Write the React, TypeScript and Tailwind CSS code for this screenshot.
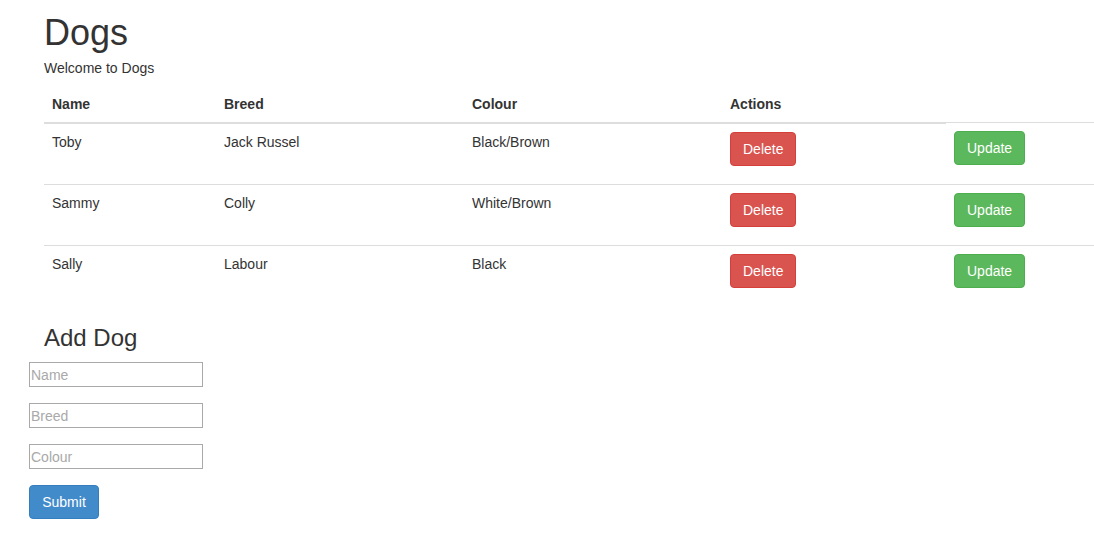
import { useState } from "react";

type Dog = {
  name: string;
  breed: string;
  colour: string;
};

const initialDogs: Dog[] = [
  { name: "Toby", breed: "Jack Russel", colour: "Black/Brown" },
  { name: "Sammy", breed: "Colly", colour: "White/Brown" },
  { name: "Sally", breed: "Labour", colour: "Black" },
];

export default function App() {
  const [dogs, setDogs] = useState<Dog[]>(initialDogs);
  const [form, setForm] = useState<Dog>({ name: "", breed: "", colour: "" });

  const onChange = (field: keyof Dog) => (event: React.ChangeEvent<HTMLInputElement>) => {
    setForm((prev) => ({ ...prev, [field]: event.target.value }));
  };

  const submit = (event: React.FormEvent) => {
    event.preventDefault();
    if (!form.name) return;
    setDogs((prev) => [...prev, form]);
    setForm({ name: "", breed: "", colour: "" });
  };

  return (
    <div className="min-h-[555px] bg-white font-['Liberation_Sans',Arial,sans-serif] text-[14px] leading-[20px] text-[#333]">
      <div className="pl-[44px]">
        <h1 className="pt-[13px] text-[36px] leading-[39.6px] font-normal">Dogs</h1>
        <p className="mt-[5px]">Welcome to Dogs</p>
        <table className="mt-[8px] w-[1050px] table-fixed border-collapse">
          <colgroup>
            <col className="w-[172px]" />
            <col className="w-[248px]" />
            <col className="w-[258px]" />
            <col className="w-[224px]" />
            <col className="w-[148px]" />
          </colgroup>
          <thead>
            <tr>
              <th className="border-b-2 border-[#ddd] p-[8px] text-left font-bold">Name</th>
              <th className="border-b-2 border-[#ddd] p-[8px] text-left font-bold">Breed</th>
              <th className="border-b-2 border-[#ddd] p-[8px] text-left font-bold">Colour</th>
              <th className="border-b-2 border-[#ddd] p-[8px] text-left font-bold">Actions</th>
            </tr>
          </thead>
          <tbody>
            {dogs.map((dog, i) => (
              <tr key={i}>
                <td className="border-t border-[#ddd] p-[8px] align-top">{dog.name}</td>
                <td className="border-t border-[#ddd] p-[8px] align-top">{dog.breed}</td>
                <td className="border-t border-[#ddd] p-[8px] align-top">{dog.colour}</td>
                <td className="border-t border-[#ddd] p-[8px] align-top">
                  <div className="mb-[10px]">
                    <button
                      onClick={() => setDogs((prev) => prev.filter((_, j) => j !== i))}
                      className="h-[34px] rounded-[4px] border border-[#d43f3a] bg-[#d9534f] px-[12px] text-white"
                    >
                      Delete
                    </button>
                  </div>
                </td>
                <td className="border-t border-[#ddd] p-[8px] align-top">
                  <div className="mb-[10px]">
                    <button className="h-[34px] rounded-[4px] border border-[#4cae4c] bg-[#5cb85c] px-[12px] text-white">
                      Update
                    </button>
                  </div>
                </td>
              </tr>
            ))}
          </tbody>
        </table>
        <h3 className="mt-[19px] text-[24px] leading-[26.4px] font-normal">Add Dog</h3>
      </div>
      <form onSubmit={submit} className="mt-[11px] flex flex-col items-start gap-[16px] pl-[29px]">
        <input
          className="h-[25px] w-[174px] border border-[#a9a9a9] px-[1px] text-[14px] placeholder:text-[#a9a9a9]"
          placeholder="Name"
          value={form.name}
          onChange={onChange("name")}
        />
        <input
          className="h-[25px] w-[174px] border border-[#a9a9a9] px-[1px] text-[14px] placeholder:text-[#a9a9a9]"
          placeholder="Breed"
          value={form.breed}
          onChange={onChange("breed")}
        />
        <input
          className="h-[25px] w-[174px] border border-[#a9a9a9] px-[1px] text-[14px] placeholder:text-[#a9a9a9]"
          placeholder="Colour"
          value={form.colour}
          onChange={onChange("colour")}
        />
        <button
          type="submit"
          className="h-[34px] w-[70px] rounded-[4px] border border-[#357ebd] bg-[#428bca] text-white"
        >
          Submit
        </button>
      </form>
    </div>
  );
}
